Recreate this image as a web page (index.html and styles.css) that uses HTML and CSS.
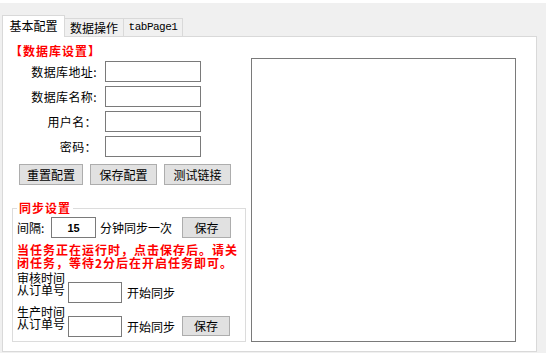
FILE: index.html
```html
<!DOCTYPE html>
<html lang="zh-CN">
<head>
<meta charset="utf-8">
<title>配置</title>
<link rel="stylesheet" href="styles.css">
</head>
<body>
<div class="topline"></div>
<div class="tabs">
  <div class="tab active">基本配置</div>
  <div class="tab">数据操作</div>
  <div class="tab mono">tabPage1</div>
</div>
<div class="panel">
  <div class="left">
    <div class="heading">【数据库设置】</div>
    <div class="form">
      <label class="flabel">数据库地址:</label><input class="txt" type="text">
      <label class="flabel">数据库名称:</label><input class="txt" type="text">
      <label class="flabel">用户名：</label><input class="txt" type="text">
      <label class="flabel">密码：</label><input class="txt" type="text">
    </div>
    <div class="buttons">
      <button class="btn b1">重置配置</button>
      <button class="btn b2">保存配置</button>
      <button class="btn b2">测试链接</button>
    </div>
    <fieldset class="sync">
      <legend class="legend">同步设置</legend>
      <div class="row1">
        <span class="lbl">间隔:</span>
        <input class="num" type="text" value="15">
        <span class="unit">分钟同步一次</span>
        <button class="btn save">保存</button>
      </div>
      <div class="warn">当任务正在运行时，点击保存后。请关<br>闭任务，等待2分后在开启任务即可。</div>
      <div class="group">
        <div class="glabel">审核时间<br>从订单号</div>
        <input class="ginput" type="text">
        <span class="gtext">开始同步</span>
      </div>
      <div class="group">
        <div class="glabel">生产时间<br>从订单号</div>
        <input class="ginput" type="text">
        <span class="gtext">开始同步</span>
        <button class="btn gsave">保存</button>
      </div>
    </fieldset>
  </div>
  <div class="box"></div>
</div>
</body>
</html>
```
FILE: styles.css
```css
* { box-sizing: border-box; }
body {
  margin: 0;
  width: 546px;
  height: 353px;
  overflow: hidden;
  background: #f0f0f0;
  font-family: "Noto Sans CJK SC", sans-serif;
  font-size: 12px;
  line-height: 16px;
  color: #000;
}
.topline { height: 3px; background: #fff; }
.tabs {
  display: flex;
  align-items: flex-end;
  margin-top: 12px;
  padding-left: 2px;
  height: 22px;
  position: relative;
  z-index: 1;
}
.tab {
  height: 18px;
  margin-bottom: 1px;
  width: 59px;
  border: 1px solid #d9d9d9;
  border-left: none;
  border-bottom: none;
  background: #f0f0f0;
  text-align: center;
  line-height: 17px;
}
.tab.active {
  width: 63px;
  height: 22px;
  margin-bottom: 0;
  border-left: 1px solid #d9d9d9;
  background: #fff;
  line-height: 20px;
}
.tab.mono {
  font-family: "Liberation Mono", monospace;
  font-size: 11px;
  letter-spacing: -0.5px;
}
.panel {
  margin: -1px 0 0 2px;
  width: 535px;
  height: 316px;
  border: 1px solid #d9d9d9;
  background: #fff;
  display: flex;
  align-items: flex-start;
}
.left {
  width: 248px;
  padding-left: 9px;
}
.heading {
  margin: 6px 0 0 -2px;
  line-height: 16px;
  color: #ff0000;
  font-weight: bold;
  letter-spacing: 1px;
}
.form {
  margin-top: 2px;
  display: grid;
  grid-template-columns: 85px 96px;
  column-gap: 8px;
  row-gap: 4px;
}
.flabel { text-align: right; line-height: 21px; letter-spacing: 0.4px; }
.txt, .num, .ginput {
  height: 21px;
  padding: 0;
  margin: 0;
  border: 1px solid #7a7a7a;
  background: #fff;
  font-family: inherit;
  font-size: 12px;
  outline: none;
}
.txt { width: 96px; }
.buttons {
  display: flex;
  gap: 7px;
  margin: 7px 0 0 7px;
}
.btn {
  height: 21px;
  padding: 0;
  margin: 0;
  border: 1px solid #adadad;
  background: #e1e1e1;
  font-family: "Noto Sans CJK SC", sans-serif;
  font-size: 12px;
  line-height: 18px;
  color: #000;
}
.b1 { width: 64px; }
.b2 { width: 67px; }
.sync {
  margin: 15px 0 0 0;
  padding: 0 13px 4px 4px;
  width: 234px;
  min-width: 0;
  border: 1px solid #dcdcdc;
}
.legend {
  padding: 0 2px;
  margin: 0;
  line-height: 16px;
  color: #ff0000;
  font-weight: bold;
  letter-spacing: 1px;
}
.row1 {
  margin-top: 1px;
  display: flex;
  align-items: center;
  height: 21px;
}
.lbl { width: 34px; }
.num {
  width: 45px;
  text-align: center;
  font-family: "Liberation Sans", sans-serif;
  font-weight: bold;
  font-size: 11px;
}
.unit { margin-left: 4px; }
.save { margin-left: 10px; width: 49px; }
.warn {
  margin-top: 5px;
  line-height: 13px;
  color: #ff0000;
  font-weight: bold;
  letter-spacing: 1px;
  white-space: nowrap;
}
.group {
  display: flex;
  align-items: flex-start;
  margin-top: 3px;
}
.glabel { width: 51px; line-height: 12px; }
.ginput { width: 54px; margin-top: 10px; }
.gtext { margin: 10px 0 0 5px; line-height: 21px; }
.gsave { margin: 10px 0 0 7px; width: 48px; height: 20px; }
.box {
  margin: 21px 0 0 0;
  width: 265px;
  height: 284px;
  border: 1px solid #7a7a7a;
  background: #fff;
}
```
